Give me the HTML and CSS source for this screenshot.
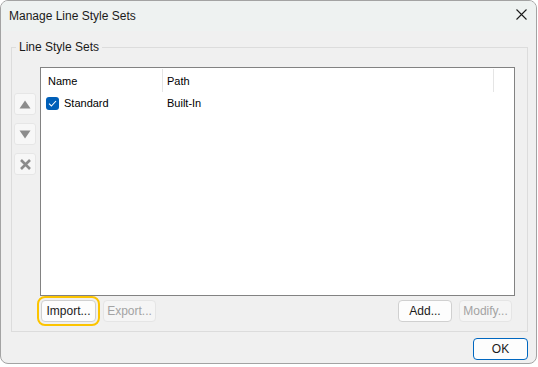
FILE: index.html
```html
<!DOCTYPE html>
<html lang="en">
<head>
  <meta charset="UTF-8">
  <title>Manage Line Style Sets</title>
  <link rel="stylesheet" href="styles.css">
</head>
<body>
  <div class="window">
    <div class="titlebar">
      <span class="title">Manage Line Style Sets</span>
      <span class="close">
        <svg width="11" height="11" viewBox="0 0 11 11"><path d="M0.5 0.5 L10.5 10.5 M10.5 0.5 L0.5 10.5" stroke="#1b1b1b" stroke-width="1.1" fill="none"/></svg>
      </span>
    </div>

    <div class="content">
      <fieldset class="group">
        <legend>Line Style Sets</legend>
        <div class="group-body">
          <div class="list-row">
            <!-- Sortier- und Loeschknoepfe links -->
            <div class="side-buttons">
              <button class="side-btn" title="Up">
                <svg width="12" height="9" viewBox="0 0 12 9"><path d="M6 0.5 L11.5 8.5 L0.5 8.5 Z" fill="#8c8c8c"/></svg>
              </button>
              <button class="side-btn" title="Down">
                <svg width="12" height="9" viewBox="0 0 12 9"><path d="M0.5 0.5 L11.5 0.5 L6 8.5 Z" fill="#8c8c8c"/></svg>
              </button>
              <button class="side-btn" title="Delete">
                <svg width="11" height="11" viewBox="0 0 11 11"><path d="M1 1 L10 10 M10 1 L1 10" stroke="#8c8c8c" stroke-width="2.6" fill="none"/></svg>
              </button>
            </div>

            <div class="list">
              <div class="list-head">
                <div class="col col-name">Name</div>
                <div class="col col-path">Path</div>
                <div class="col col-rest"></div>
              </div>
              <div class="list-item">
                <div class="col col-name">
                  <span class="check">
                    <svg width="9" height="7" viewBox="0 0 9 7"><path d="M1 3.6 L3.4 6 L8 1" stroke="#fff" stroke-width="1.1" fill="none"/></svg>
                  </span>
                  Standard
                </div>
                <div class="col col-path">Built-In</div>
              </div>
            </div>
          </div>

          <div class="action-row">
            <button class="btn btn-import focused">Import...</button>
            <button class="btn btn-export" disabled>Export...</button>
            <span class="spacer"></span>
            <button class="btn btn-add">Add...</button>
            <button class="btn btn-modify" disabled>Modify...</button>
          </div>
        </div>
      </fieldset>

      <div class="footer">
        <button class="btn btn-ok">OK</button>
      </div>
    </div>
  </div>
</body>
</html>
```

FILE: styles.css
```css
/* Grundlayout */
* { box-sizing: border-box; }
body {
  margin: 0;
  background: #fff;
  font-family: 'Liberation Sans', Arial, sans-serif;
  font-size: 12px;
  color: #000;
}
.window {
  width: 537px;
  height: 364px;
  border: 1px solid #a3a3a3;
  border-radius: 8px;
  background: #f0f0f0;
  overflow: hidden;
  display: flex;
  flex-direction: column;
}

/* Titelleiste */
.titlebar {
  height: 30px;
  background: #eef2f1;
  display: flex;
  align-items: center;
  justify-content: space-between;
  padding: 0 9px 1px 8px;
}
.title { font-size: 12px; color: #1a1a1a; }
.close { display: flex; margin-top: -2px; }

/* Gruppenrahmen */
.content { padding: 9px 8px 0 10px; }
.group {
  margin: 0;
  padding: 0;
  border: 1px solid #dcdcdc;
  min-width: 0;
}
.group legend {
  margin-left: 4px;
  padding: 0 3px;
  font-size: 12px;
  line-height: 14px;
  color: #1a1a1a;
}
.group-body { padding: 13px 12px 9px 2px; }

.list-row {
  display: flex;
  gap: 4px;
}
.side-buttons {
  display: flex;
  flex-direction: column;
  gap: 8px;
  padding-top: 26px;
}
.side-btn {
  width: 22px;
  height: 22px;
  padding: 0;
  border: 1px solid #e6e6e6;
  border-radius: 3px;
  background: #f7f7f7;
  display: flex;
  align-items: center;
  justify-content: center;
}

/* Liste */
.list {
  flex: 1;
  height: 229px;
  border: 1px solid #828282;
  background: #fff;
  font-size: 11px;
}
.list-head, .list-item {
  display: grid;
  grid-template-columns: 122px 331px 1fr;
}
.list-head { height: 25px; }
.list-head .col {
  display: flex;
  align-items: center;
  margin: 1px 0;
}
.list-head .col-name { padding-left: 7px; border-right: 1px solid #e5e5e5; }
.list-head .col-path { padding-left: 4px; border-right: 1px solid #e5e5e5; }
.list-item { height: 20px; }
.list-item .col { display: flex; align-items: center; }
.list-item .col-name { padding-left: 5px; gap: 5px; }
.list-item .col-path { padding-left: 4px; }
.check {
  width: 13px;
  height: 13px;
  border-radius: 3px;
  background: #005fb8;
  display: flex;
  align-items: center;
  justify-content: center;
}

/* Knoepfe */
.action-row {
  display: flex;
  gap: 7px;
  padding: 4px 3px 0 27px;
}
.spacer { flex: 1; }
.btn {
  height: 22px;
  padding: 0;
  font-family: 'Liberation Sans', Arial, sans-serif;
  font-size: 12px;
  color: #1a1a1a;
  background: #fdfdfd;
  border: 1px solid #d0d0d0;
  border-radius: 4px;
}
.btn:disabled {
  color: #a3a3a3;
  background: #f5f5f5;
  border-color: #e5e5e5;
}
.btn-import { width: 55px; }
.btn-export { width: 53px; }
.btn-add { width: 54px; }
.btn-modify { width: 53px; }
.btn.focused {
  outline: 2px solid #fcc400;
  outline-offset: 2px;
}
.footer {
  display: flex;
  justify-content: flex-end;
  padding-top: 6px;
}
.btn-ok {
  width: 55px;
  border-color: #0067c0;
}
```
